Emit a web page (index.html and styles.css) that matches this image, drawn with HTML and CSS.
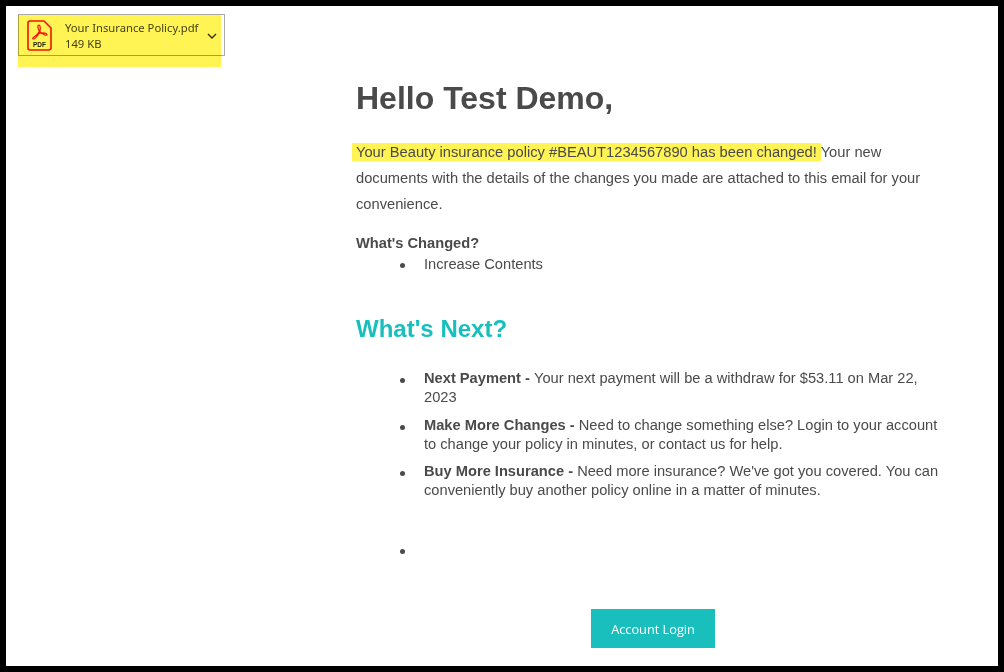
FILE: index.html
```html
<!DOCTYPE html>
<html lang="en">
<head>
<meta charset="utf-8">
<title>Your Insurance Policy</title>
<link rel="stylesheet" href="styles.css">
</head>
<body>
<div class="frame">
  <div class="attachment">
    <svg class="pdf-icon" width="25" height="31" viewBox="0 0 25 31" aria-hidden="true">
      <path class="pdf-page" d="M3 1H17L24 8V27.5Q24 30 21.5 30H3Q1 30 1 28V3Q1 1 3 1Z"/>
      <path class="pdf-swoosh" d="M11.8 5.2C10.4 5.2 10.6 8.4 12.4 11.2C11.2 13.8 9.4 15.7 6.6 17.2C5 18.2 5.8 19.6 7.4 18.7C9.8 17.2 11.8 13.8 13 10.6C13.6 8.4 13.4 5.2 11.8 5.2ZM9.8 14.4C13 13 17 12.6 19.2 13.5C20.8 14.3 19.8 15.8 18 15C15.8 14 13.8 13 12.4 11.2"/>
      <text class="pdf-label" x="12.5" y="26.5">PDF</text>
    </svg>
    <div class="file-meta">
      <div class="file-name">Your Insurance Policy.pdf</div>
      <div class="file-size">149 KB</div>
    </div>
    <svg class="chevron" width="10" height="6" viewBox="0 0 10 6" aria-hidden="true"><path d="M1 1L5 5L9 1"/></svg>
  </div>
  <div class="marker-block"></div>

  <main class="content">
    <h1 class="greeting">Hello Test Demo,</h1>
    <p class="intro"><span class="hl">Your Beauty insurance policy #BEAUT1234567890 has been changed!</span> Your new documents with the details of the changes you made are attached to this email for your convenience.</p>
    <div class="changed-title">What's Changed?</div>
    <ul class="changed-list"><li>Increase Contents</li></ul>
    <h2 class="next-title">What's Next?</h2>
    <ul class="next-list">
      <li><b>Next Payment - </b>Your next payment will be a withdraw for $53.11 on Mar 22, 2023</li>
      <li><b>Make More Changes - </b>Need to change something else? Login to your account to change your policy in minutes, or contact us for help.</li>
      <li><b>Buy More Insurance - </b>Need more insurance? We've got you covered. You can conveniently buy another policy online in a matter of minutes.</li>
      <li class="empty-item"></li>
    </ul>
    <div class="cta"><a class="login-btn">Account Login</a></div>
  </main>
</div>
</body>
</html>
```

FILE: styles.css
```css
html, body { margin: 0; padding: 0; background: #fff; }
.frame {
  position: relative;
  box-sizing: border-box;
  width: 1004px;
  height: 672px;
  border: 6px solid #000;
  padding: 8px 0 0 12px;
  overflow: hidden;
  background: #fff;
  font-family: "Liberation Sans", Arial, sans-serif;
  color: #4a4a4a;
}
.attachment {
  box-sizing: border-box;
  width: 207px;
  height: 42px;
  border: 1px solid #a9a9a9;
  display: flex;
  align-items: center;
  padding-left: 8px;
  font-family: "Noto Sans", sans-serif;
  color: #444;
}
.pdf-icon { flex: none; margin-right: 13px; }
.pdf-page { fill: none; stroke: #f01414; stroke-width: 1.6; }
.pdf-swoosh { fill: none; stroke: #f01414; stroke-width: 1.2; }
.pdf-label { font: bold 6.5px "Liberation Sans", sans-serif; fill: #222; text-anchor: middle; }
.file-meta { flex: 1; min-width: 0; padding-top: 2px; }
.file-name { font-size: 11.25px; line-height: 16px; white-space: nowrap; }
.file-size { font-size: 11.25px; line-height: 16px; }
.chevron { flex: none; margin: 2px 7px 0 0; }
.chevron path { fill: none; stroke: #333; stroke-width: 1.4; }
.marker-block {
  position: absolute;
  left: 12px;
  top: 9px;
  width: 203px;
  height: 52px;
  background: #fff453;
  mix-blend-mode: multiply;
}
.content {
  width: 594px;
  margin-left: 338px;
}
.greeting {
  margin: 0;
  padding-top: 22px;
  font-size: 32px;
  line-height: 40px;
  font-weight: bold;
}
.intro {
  margin: 21px 0 0;
  font-size: 14.7px;
  line-height: 26px;
}
.hl {
  background: #fff453;
  padding: 1px 4px;
  margin: 0 -4px;
}
.changed-title {
  margin-top: 16px;
  font-size: 14.67px;
  line-height: 21px;
  font-weight: bold;
}
.changed-list, .next-list {
  margin: 0;
  padding: 0 0 0 68px;
  font-size: 14.67px;
  line-height: 19px;
  list-style: none;
}
.changed-list li, .next-list li { position: relative; }
.changed-list li::before, .next-list li::before {
  content: "";
  position: absolute;
  left: -24px;
  top: 9px;
  width: 5px;
  height: 5px;
  border-radius: 50%;
  background: #4a4a4a;
}
.changed-list li { line-height: 21px; }
.next-title {
  margin: 39px 0 0;
  font-size: 24px;
  line-height: 30px;
  font-weight: bold;
  color: #19bfbd;
}
.next-list { margin-top: 25px; }
.next-list li { margin-bottom: 8.5px; }
.next-list .empty-item { height: 19px; margin: 40px 0 0; }
.cta { display: flex; justify-content: center; margin-top: 50px; }
.login-btn {
  width: 124px;
  height: 39px;
  display: flex;
  align-items: center;
  justify-content: center;
  background: #19bfbd;
  color: #fff;
  font-family: "Open Sans", sans-serif;
  font-size: 12.75px;
}
```
